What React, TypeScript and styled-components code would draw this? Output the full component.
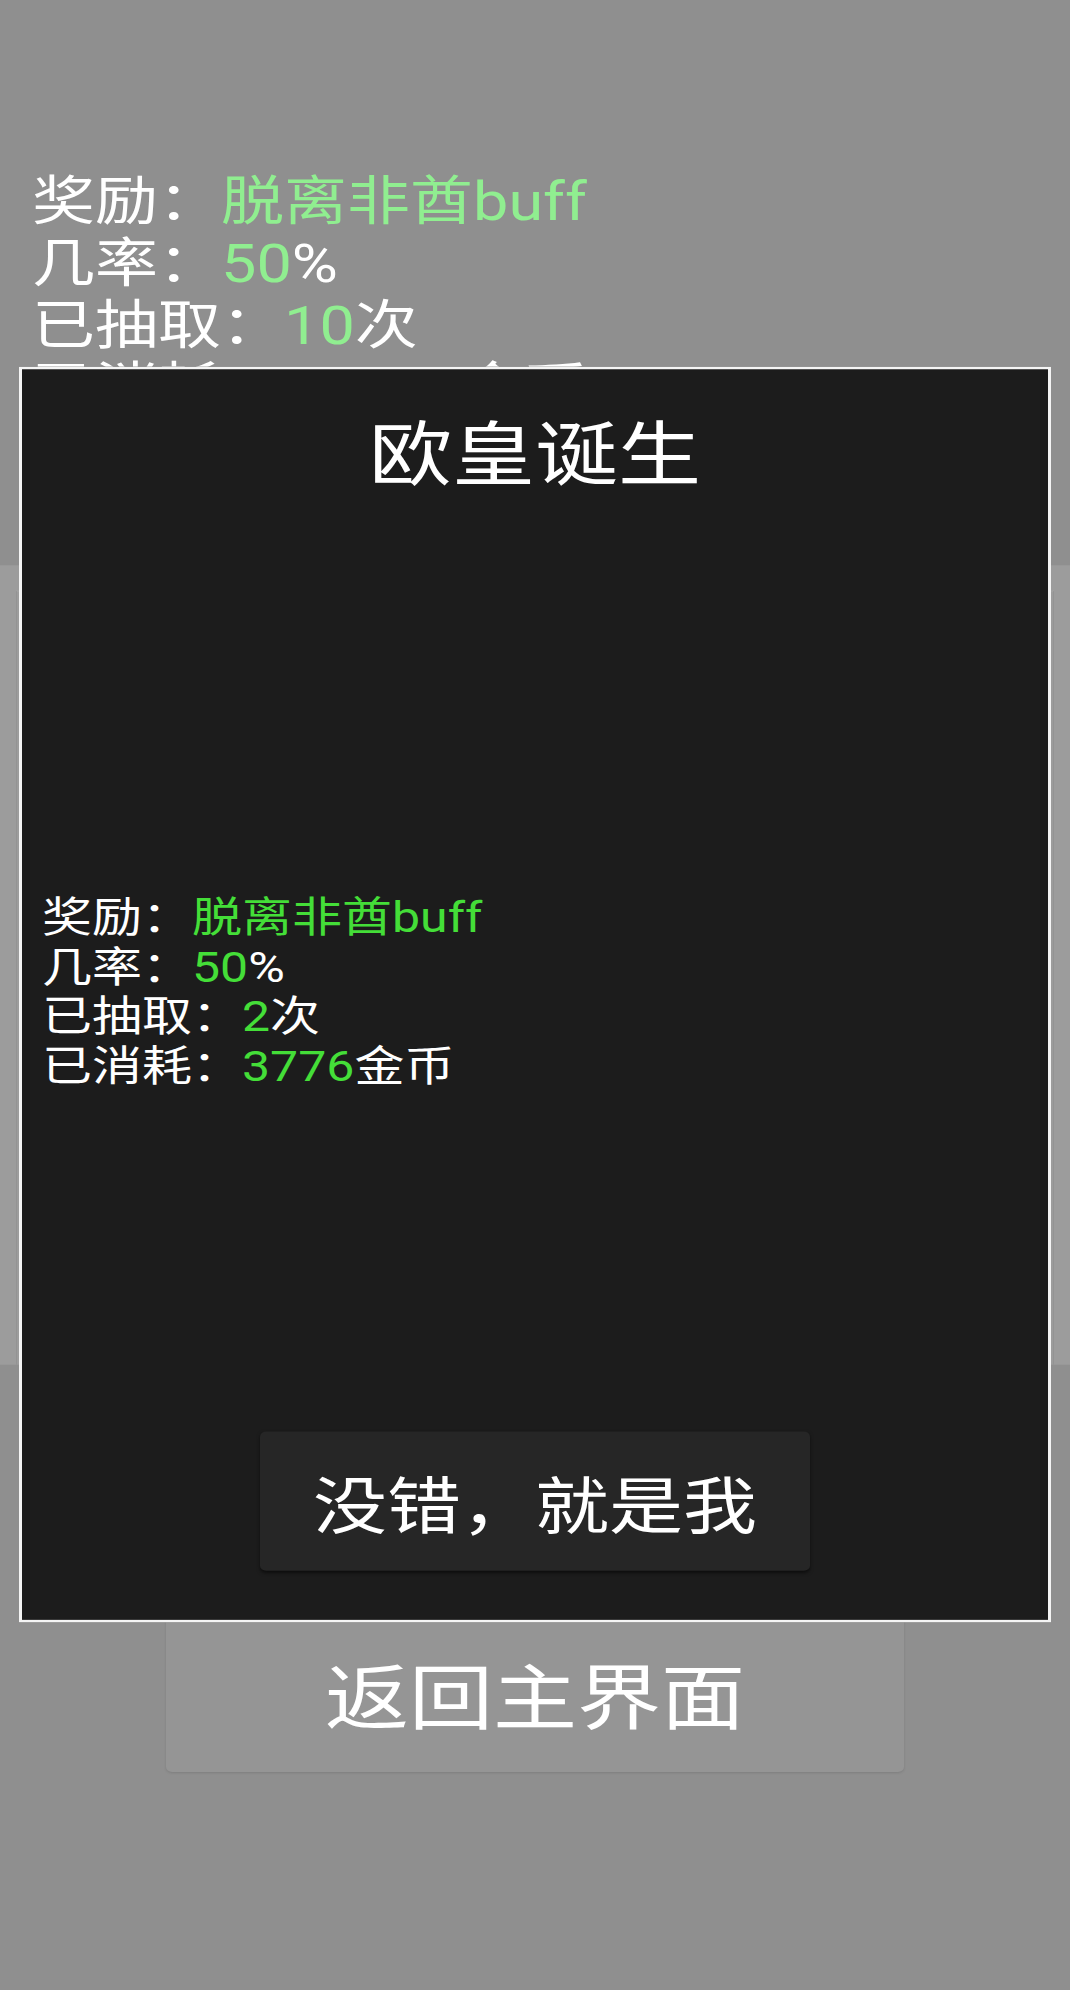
import React from "react";
import styled, { createGlobalStyle } from "styled-components";

// the reference is a phone capture squeezed vertically, so the page is laid
// out at full height and scaled once on the Y axis
const SQUISH = 0.845;

const GlobalStyle = createGlobalStyle`
  html, body {
    margin: 0;
    padding: 0;
    overflow: hidden;
    background: #8f8f8f;
  }
  * {
    box-sizing: border-box;
  }
`;

const Viewport = styled.div`
  width: 1070px;
  height: 1990px;
  overflow: hidden;
`;

const Stage = styled.div`
  position: relative;
  width: 1070px;
  height: ${Math.round(1990 / SQUISH)}px;
  transform: scaleY(${SQUISH});
  transform-origin: top left;
  background: #8f8f8f;
  font-family: Roboto, "Noto Sans CJK SC", "Noto Sans", sans-serif;
  color: #ffffff;
  display: flex;
  flex-direction: column;
`;

const Stats = styled.div<{ $size: number; $pad: string }>`
  padding: ${(p) => p.$pad};
  font-size: ${(p) => p.$size}px;
  line-height: ${(p) => Math.round(p.$size * 1.17 * 10) / 10}px;
  white-space: nowrap;
`;

const Line = styled.div``;

const Value = styled.span<{ $color: string }>`
  color: ${(p) => p.$color};
`;

const Panel = styled.div`
  margin-top: 172px;
  height: 946px;
  background: #9c9c9c;
  display: flex;
  padding-top: 30px;
`;

const PanelCard = styled.div`
  flex: 1;
  margin: 0 16px;
  border-left: 1px solid #939393;
  border-right: 1px solid #939393;
  border-top: 1px solid #a5a5a5;
`;

const BackButton = styled.div`
  align-self: center;
  margin-top: 294px;
  width: 738px;
  height: 188px;
  border-radius: 6px;
  background: #959595;
  box-shadow: 0 1px 3px rgba(0, 0, 0, 0.12);
  display: flex;
  align-items: center;
  justify-content: center;
  font-family: "Noto Sans CJK SC", sans-serif;
  font-size: 84px;
  color: #ffffff;
`;

const Dialog = styled.div`
  position: absolute;
  top: 434px;
  left: 19px;
  width: 1032px;
  height: 1486px;
  border: 3px solid #f4f4f4;
  background: #1c1c1c;
  display: flex;
  flex-direction: column;
`;

const Title = styled.div`
  padding-top: 47px;
  text-align: center;
  font-family: "Noto Sans CJK SC", sans-serif;
  font-size: 83px;
  line-height: 97px;
  color: #ffffff;
`;

const Body = styled.div`
  margin-top: 476px;
`;

const ConfirmButton = styled.div`
  align-self: center;
  margin-top: auto;
  margin-bottom: 58px;
  width: 550px;
  height: 165px;
  border-radius: 6px;
  background: #262626;
  box-shadow: 0 2px 4px rgba(0, 0, 0, 0.55);
  display: flex;
  align-items: center;
  justify-content: center;
  font-family: "Noto Sans CJK SC", sans-serif;
  font-size: 74px;
  color: #ffffff;
`;

type Stat = { label: string; value: string; unit?: string };

const behind: Stat[] = [
  { label: "奖励：", value: "脱离非酋buff" },
  { label: "几率：", value: "50", unit: "%" },
  { label: "已抽取：", value: "10", unit: "次" },
  { label: "已消耗：", value: "18880", unit: "金币" },
];

const result: Stat[] = [
  { label: "奖励：", value: "脱离非酋buff" },
  { label: "几率：", value: "50", unit: "%" },
  { label: "已抽取：", value: "2", unit: "次" },
  { label: "已消耗：", value: "3776", unit: "金币" },
];

const StatList = (props: { items: Stat[]; size: number; pad: string; green: string }) => (
  <Stats $size={props.size} $pad={props.pad}>
    {props.items.map((item) => (
      <Line key={item.label}>
        {item.label}
        <Value $color={props.green}>{item.value}</Value>
        {item.unit}
      </Line>
    ))}
  </Stats>
);

export default function App() {
  return (
    <>
      <GlobalStyle />
      <Viewport>
        <Stage>
          <StatList items={behind} size={63} pad="202px 0 0 32px" green="#90ee90" />
          <Panel>
            <PanelCard />
          </Panel>
          <BackButton>返回主界面</BackButton>

          <Dialog>
            <Title>欧皇诞生</Title>
            <Body>
              <StatList items={result} size={50} pad="0 0 0 20px" green="#44de38" />
            </Body>
            <ConfirmButton>没错，就是我</ConfirmButton>
          </Dialog>
        </Stage>
      </Viewport>
    </>
  );
}
